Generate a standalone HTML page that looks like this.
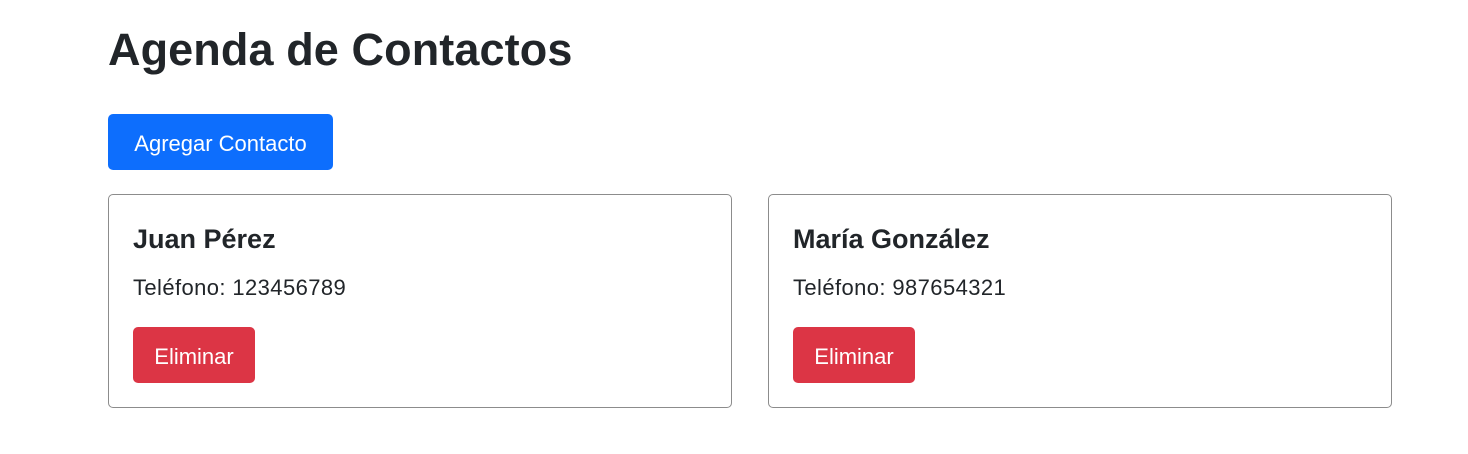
<!DOCTYPE html>
<html><head><meta charset="utf-8"><style>
html,body{margin:0;padding:0;background:#fff;width:1468px;height:454px;overflow:hidden}
body{font-family:"Liberation Sans",sans-serif;color:#212529;position:relative}
h1{position:absolute;left:108px;top:22px;margin:0;font-size:45px;font-weight:700;line-height:56px;letter-spacing:0.1px}
.btn{position:absolute;border-radius:5px;color:#fff;font-size:22px;display:flex;align-items:center;justify-content:center;padding-top:3px;box-sizing:border-box}
.add{left:108px;top:114px;width:225px;height:56px;background:#0d6efd}
.card{position:absolute;top:194px;width:624px;height:214px;border:1px solid #8c8c8c;border-radius:5px;box-sizing:border-box}
.card h5{position:absolute;left:24px;top:26px;margin:0;font-size:27px;font-weight:700;line-height:36px}
.card p{position:absolute;left:24px;top:78px;margin:0;font-size:22px;line-height:30px;letter-spacing:0.4px}
.del{left:24px;top:132px;width:122px;height:56px;background:#dc3545}
</style></head><body>
<h1>Agenda de Contactos</h1>
<div class="btn add">Agregar Contacto</div>
<div class="card" style="left:108px"><h5>Juan Pérez</h5><p>Teléfono: 123456789</p><div class="btn del">Eliminar</div></div>
<div class="card" style="left:768px"><h5>María González</h5><p>Teléfono: 987654321</p><div class="btn del">Eliminar</div></div>
</body></html>
